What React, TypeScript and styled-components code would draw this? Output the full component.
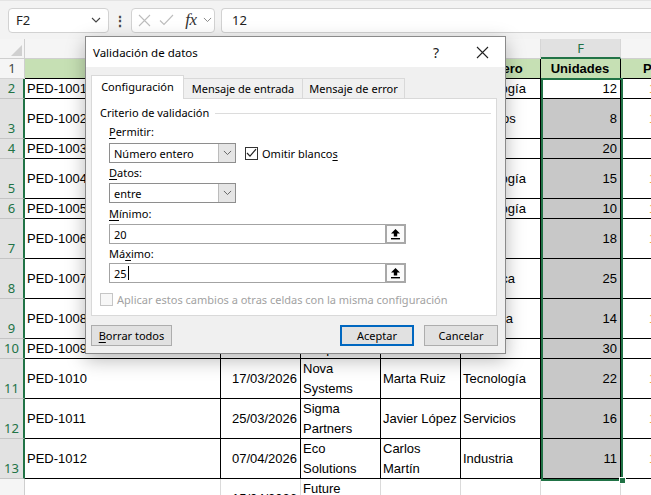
import React from "react";
import styled, { createGlobalStyle, css } from "styled-components";

const UI = `"Segoe UI", "Noto Sans", "Open Sans", sans-serif`;
const CELL = `"Liberation Sans", Arial, sans-serif`;
const GREEN = "#217346";
const COLS = "25px 196px 80px 80px 80px 80px 80px 110px";

const GlobalStyle = createGlobalStyle`
  html, body { margin: 0; padding: 0; background: #fff; overflow: hidden; }
  * { box-sizing: border-box; }
`;

const Page = styled.div`
  position: relative;
  width: 651px;
  height: 495px;
  overflow: hidden;
  background: #fff;
`;

/* ---------- formula bar ---------- */
const FormulaBar = styled.div`
  display: flex;
  align-items: center;
  height: 39px;
  padding-left: 8px;
  background: #f3f3f3;
  border-top: 1px solid #e4e4e4;
  font-family: ${UI};
  font-size: 13px;
  color: #222;
`;

const Box = styled.div`
  height: 25px;
  background: #fff;
  border: 1px solid #d2d2d2;
  border-radius: 4px;
  display: flex;
  align-items: center;
`;

const NameBox = styled(Box)`
  width: 101px;
  justify-content: space-between;
  padding: 0 7px 0 7px;
`;

const Dots = styled.div`
  width: 22px;
  text-align: center;
  font-weight: bold;
  font-size: 14px;
  color: #444;
`;

const FxBox = styled(Box)`
  width: 84px;
  padding-left: 5px;
`;

const FxSlot = styled.div<{ $w: number }>`
  width: ${(p) => p.$w}px;
  display: flex;
  align-items: center;
  justify-content: center;
`;

const FxText = styled.span`
  font-family: "Liberation Serif", "DejaVu Serif", serif;
  font-style: italic;
  font-size: 17px;
  color: #333;
  letter-spacing: -0.5px;
`;

const FormulaInput = styled(Box)`
  flex: 1;
  margin-left: 6px;
  border-right: none;
  border-radius: 4px 0 0 4px;
  padding-left: 10px;
`;

/* ---------- sheet ---------- */
const Sheet = styled.div`
  display: flex;
  flex-direction: column;
`;

const HeaderRow = styled.div`
  display: grid;
  grid-template-columns: ${COLS};
  height: 20px;
  background: #f5f5f5;
`;

const Corner = styled.div`
  display: flex;
  align-items: flex-end;
  justify-content: flex-end;
  padding: 0 2px 2px 0;
  border-right: 1px solid #cfcfcf;
  border-bottom: 1px solid #cfcfcf;
`;

const ColHead = styled.div<{ $sel?: boolean }>`
  display: flex;
  align-items: center;
  justify-content: center;
  font-family: ${UI};
  font-size: 13px;
  color: #555;
  border-right: 1px solid #d6d6d6;
  border-bottom: 1px solid #cfcfcf;
  ${(p) =>
    p.$sel &&
    css`
      background: #e1e1e1;
      color: ${GREEN};
      border-bottom: 2px solid ${GREEN};
    `}
`;

const DataRow = styled.div<{ $h: number }>`
  display: grid;
  grid-template-columns: ${COLS};
  grid-template-rows: ${(p) => p.$h}px;
  height: ${(p) => p.$h}px;
  flex-shrink: 0;
`;

const RowHead = styled.div<{ $sel?: boolean }>`
  display: flex;
  align-items: flex-end;
  justify-content: center;
  padding-bottom: 1px;
  font-family: ${UI};
  font-size: 13px;
  line-height: 17px;
  background: ${(p) => (p.$sel ? "#e2e2e2" : "#f5f5f5")};
  color: ${(p) => (p.$sel ? GREEN : "#444")};
  border-bottom: 1px solid ${(p) => (p.$sel ? "#c4c4c4" : "#d4d4d4")};
  border-right: ${(p) => (p.$sel ? `2px solid ${GREEN}` : "1px solid #cfcfcf")};
`;

const Cell = styled.div<{
  $align?: "left" | "right" | "center";
  $bg?: string;
  $bold?: boolean;
  $plain?: boolean;
  $last?: boolean;
  $color?: string;
  $indent?: number;
}>`
  display: flex;
  align-items: center;
  justify-content: ${(p) =>
    p.$align === "right" ? "flex-end" : p.$align === "center" ? "center" : "flex-start"};
  text-align: ${(p) => p.$align || "left"};
  padding: 0 3px 0 ${(p) => (p.$indent != null ? p.$indent : 2)}px;
  font-family: ${CELL};
  font-size: 13px;
  line-height: 20px;
  font-weight: ${(p) => (p.$bold ? 700 : 400)};
  color: ${(p) => p.$color || "#000"};
  background: ${(p) => p.$bg || "#fff"};
  border-bottom: 1px solid ${(p) => (p.$plain ? "#dadada" : "#000")};
  border-right: ${(p) => (p.$last ? "none" : `1px solid ${p.$plain ? "#dadada" : "#000"}`)};
  overflow: hidden;
  white-space: ${(p) => (p.$align === "right" || p.$last ? "nowrap" : "normal")};
`;

const Selection = styled.div`
  position: absolute;
  left: 541px;
  top: 78px;
  width: 82px;
  height: 403px;
  border: 2px solid ${GREEN};
  pointer-events: none;
`;

const FillHandle = styled.div`
  position: absolute;
  right: -5px;
  bottom: -5px;
  width: 7px;
  height: 7px;
  background: ${GREEN};
  border: 1px solid #fff;
`;

/* ---------- dialog ---------- */
const Dialog = styled.div`
  position: absolute;
  left: 85px;
  top: 36px;
  width: 421px;
  height: 318px;
  display: flex;
  flex-direction: column;
  background: #f0f0f0;
  border: 1px solid #8a8a8a;
  box-shadow: 0 6px 18px rgba(0, 0, 0, 0.28);
  font-family: ${UI};
  font-size: 11px;
  color: #000;
`;

const TitleBar = styled.div`
  display: flex;
  align-items: center;
  height: 30px;
  background: #fff;
  padding-left: 7px;
`;

const TitleText = styled.div`
  flex: 1;
  font-size: 11.5px;
`;

const TitleButton = styled.div`
  width: 46px;
  height: 30px;
  display: flex;
  align-items: center;
  justify-content: center;
  font-size: 14px;
  color: #222;
`;

const Body = styled.div`
  flex: 1;
  display: flex;
  flex-direction: column;
  padding: 8px 8px 0 5px;
`;

const TabStrip = styled.div`
  display: flex;
  align-items: flex-end;
  height: 23px;
`;

const Tab = styled.div<{ $w: number; $active?: boolean }>`
  width: ${(p) => p.$w}px;
  height: ${(p) => (p.$active ? 24 : 20)}px;
  display: flex;
  align-items: center;
  justify-content: center;
  padding-bottom: ${(p) => (p.$active ? 2 : 0)}px;
  background: ${(p) => (p.$active ? "#fff" : "#f0f0f0")};
  border: 1px solid #d9d9d9;
  border-bottom: none;
  border-left: ${(p) => (p.$active ? "1px solid #d9d9d9" : "none")};
  margin-bottom: ${(p) => (p.$active ? -1 : 0)}px;
  white-space: nowrap;
  position: relative;
  z-index: ${(p) => (p.$active ? 1 : 0)};
`;

const Panel = styled.div`
  height: 218px;
  background: #fff;
  border: 1px solid #d9d9d9;
  padding: 7px 5px 0 8px;
`;

const GroupHeader = styled.div`
  display: flex;
  align-items: center;
  gap: 6px;
  line-height: 14px;
`;

const GroupLine = styled.div`
  flex: 1;
  height: 1px;
  background: #dcdcdc;
`;

const Form = styled.div`
  display: flex;
  flex-direction: column;
  padding-left: 9px;
`;

const FieldLabel = styled.div<{ $mt: number }>`
  line-height: 14px;
  margin-top: ${(p) => p.$mt}px;
`;

const Key = styled.span`
  text-decoration: underline;
  text-underline-offset: 2px;
`;

const FieldRow = styled.div<{ $mt: number }>`
  display: flex;
  align-items: center;
  gap: 9px;
  margin-top: ${(p) => p.$mt}px;
`;

const Select = styled.div`
  width: 127px;
  height: 20px;
  display: flex;
  border: 1px solid #8e8e8e;
  background: #fff;
`;

const SelectValue = styled.div`
  flex: 1;
  display: flex;
  align-items: center;
  padding-left: 4px;
`;

const SelectButton = styled.div`
  width: 17px;
  display: flex;
  align-items: center;
  justify-content: center;
  background: #e5e5e5;
  border-left: 1px solid #bcbcbc;
`;

const CheckBox = styled.div<{ $disabled?: boolean }>`
  width: 13px;
  height: 13px;
  display: flex;
  align-items: center;
  justify-content: center;
  border: 1px solid ${(p) => (p.$disabled ? "#c6c6c6" : "#333")};
  background: ${(p) => (p.$disabled ? "#f7f7f7" : "#fff")};
`;

const CheckLabel = styled.span<{ $disabled?: boolean }>`
  margin-left: -5px;
  white-space: nowrap;
  color: ${(p) => (p.$disabled ? "#a2a2a2" : "#000")};
`;

const TextInput = styled.div`
  width: 297px;
  height: 20px;
  display: flex;
  border: 1px solid #a3a3a3;
  background: #fff;
`;

const InputValue = styled.div`
  flex: 1;
  display: flex;
  align-items: center;
  padding-left: 4px;
`;

const Caret = styled.span`
  display: inline-block;
  width: 1px;
  height: 14px;
  background: #000;
  margin-left: 1px;
`;

const RangeButton = styled.div`
  width: 21px;
  margin: -1px -1px -1px 0;
  display: flex;
  align-items: center;
  justify-content: center;
  border: 2px solid #a8a8a8;
  background: #fbfbfb;
`;

const ButtonRow = styled.div`
  display: flex;
  align-items: center;
  margin-top: 9px;
`;

const ButtonGroup = styled.div`
  display: flex;
  gap: 10px;
  margin-left: auto;
  margin-right: -1px;
`;

const Button = styled.div<{ $w: number; $primary?: boolean }>`
  width: ${(p) => p.$w}px;
  height: 21px;
  display: flex;
  align-items: center;
  justify-content: center;
  background: #e1e1e1;
  border: ${(p) => (p.$primary ? "2px solid #0067c0" : "1px solid #adadad")};
`;

/* ---------- icons ---------- */
const Chevron = ({ color = "#444", w = 10 }: { color?: string; w?: number }) => (
  <svg width={w} height={w / 2 + 1} viewBox="0 0 10 6">
    <polyline points="1,1 5,5 9,1" fill="none" stroke={color} strokeWidth="1.1" />
  </svg>
);

const RangeIcon = () => (
  <svg width="11" height="12" viewBox="0 0 11 12">
    <path d="M5.5 1 L10 5.6 H7.2 V8.6 H3.8 V5.6 H1 Z" fill="#000" />
    <rect x="1" y="10" width="9" height="1.4" fill="#000" />
  </svg>
);

/* ---------- data ---------- */
type Row = {
  n: number;
  h: number;
  a: string;
  b: string;
  c: string;
  d: string;
  e: string;
  f: string;
  g: boolean;
};

const rows: Row[] = [
  { n: 2, h: 20, a: "PED-1001", b: "05/01/2026", c: "TechNova", d: "Ana Gómez", e: "Tecnología", f: "12", g: true },
  { n: 3, h: 40, a: "PED-1002", b: "12/01/2026", c: "Global Services", d: "Luis Pérez", e: "Servicios", f: "8", g: true },
  { n: 4, h: 20, a: "PED-1003", b: "20/01/2026", c: "MegaStore", d: "Sara Díaz", e: "Retail", f: "20", g: false },
  { n: 5, h: 40, a: "PED-1004", b: "28/01/2026", c: "Data Solutions", d: "Pedro Sanz", e: "Tecnología", f: "15", g: true },
  { n: 6, h: 20, a: "PED-1005", b: "03/02/2026", c: "CloudIT", d: "Elena Ruiz", e: "Tecnología", f: "10", g: true },
  { n: 7, h: 40, a: "PED-1006", b: "10/02/2026", c: "Retail Express", d: "Jorge Vega", e: "Retail", f: "18", g: true },
  { n: 8, h: 40, a: "PED-1007", b: "18/02/2026", c: "Trans Cargo", d: "Lucía Mora", e: "Logística", f: "25", g: false },
  { n: 9, h: 40, a: "PED-1008", b: "25/02/2026", c: "Metal Works", d: "Diego Gil", e: "Industria", f: "14", g: true },
  { n: 10, h: 20, a: "PED-1009", b: "06/03/2026", c: "ShopMax", d: "Ana Pérez", e: "Retail", f: "30", g: false },
  { n: 11, h: 40, a: "PED-1010", b: "17/03/2026", c: "Nova Systems", d: "Marta Ruiz", e: "Tecnología", f: "22", g: true },
  { n: 12, h: 40, a: "PED-1011", b: "25/03/2026", c: "Sigma Partners", d: "Javier López", e: "Servicios", f: "16", g: true },
  { n: 13, h: 40, a: "PED-1012", b: "07/04/2026", c: "Eco Solutions", d: "Carlos Martín", e: "Industria", f: "11", g: true },
];

const HEAD_BG = "#c6e0b4";
const SEL_BG = "#c8c8c8";
const ORANGE = "#eea43a";

export default function App() {
  return (
    <Page>
      <GlobalStyle />
      <FormulaBar>
        <NameBox>
          <span>F2</span>
          <Chevron />
        </NameBox>
        <Dots>⋮</Dots>
        <FxBox>
          <FxSlot $w={14}>
            <svg width="13" height="13" viewBox="0 0 13 13">
              <path d="M1 1L12 12M12 1L1 12" stroke="#bdbdbd" strokeWidth="1.1" />
            </svg>
          </FxSlot>
          <FxSlot $w={30}>
            <svg width="15" height="12" viewBox="0 0 15 12">
              <path d="M1 6.5L5 10.5L14 1" fill="none" stroke="#bdbdbd" strokeWidth="1.1" />
            </svg>
          </FxSlot>
          <FxSlot $w={20}>
            <FxText>fx</FxText>
          </FxSlot>
          <FxSlot $w={12}>
            <Chevron color="#888" w={9} />
          </FxSlot>
        </FxBox>
        <FormulaInput>12</FormulaInput>
      </FormulaBar>

      <Sheet>
        <HeaderRow>
          <Corner>
            <svg width="11" height="11" viewBox="0 0 11 11">
              <path d="M11 0V11H0Z" fill="#d0d0d0" />
            </svg>
          </Corner>
          <ColHead>A</ColHead>
          <ColHead>B</ColHead>
          <ColHead>C</ColHead>
          <ColHead>D</ColHead>
          <ColHead>E</ColHead>
          <ColHead $sel>F</ColHead>
          <ColHead>G</ColHead>
        </HeaderRow>

        <DataRow $h={20}>
          <RowHead>1</RowHead>
          <Cell $bg={HEAD_BG} $bold $align="center">Pedido</Cell>
          <Cell $bg={HEAD_BG} $bold $align="center">Fecha</Cell>
          <Cell $bg={HEAD_BG} $bold $align="center">Cliente</Cell>
          <Cell $bg={HEAD_BG} $bold $align="center">Vendedor</Cell>
          <Cell $bg={HEAD_BG} $bold $align="center">Género</Cell>
          <Cell $bg={HEAD_BG} $bold $align="center">Unidades</Cell>
          <Cell $bg={HEAD_BG} $bold $indent={22} $last>Precio</Cell>
        </DataRow>

        {rows.map((r) => (
          <DataRow key={r.n} $h={r.h}>
            <RowHead $sel>{r.n}</RowHead>
            <Cell>{r.a}</Cell>
            <Cell $align="right">{r.b}</Cell>
            <Cell>{r.c}</Cell>
            <Cell>{r.d}</Cell>
            <Cell>{r.e}</Cell>
            <Cell $align="right" $bg={r.n === 2 ? "#fff" : SEL_BG}>
              {r.f}
            </Cell>
            <Cell $last $indent={28} $color={ORANGE}>
              {r.g ? "125,00 €" : ""}
            </Cell>
          </DataRow>
        ))}

        <DataRow $h={40}>
          <RowHead>14</RowHead>
          <Cell $plain></Cell>
          <Cell $plain $align="right">15/04/2026</Cell>
          <Cell $plain>Future Retail</Cell>
          <Cell $plain></Cell>
          <Cell $plain></Cell>
          <Cell $plain></Cell>
          <Cell $plain $last></Cell>
        </DataRow>
      </Sheet>

      <Selection>
        <FillHandle />
      </Selection>

      <Dialog>
        <TitleBar>
          <TitleText>Validación de datos</TitleText>
          <TitleButton>?</TitleButton>
          <TitleButton>
            <svg width="13" height="13" viewBox="0 0 13 13">
              <path d="M1 1L12 12M12 1L1 12" stroke="#222" strokeWidth="1.1" />
            </svg>
          </TitleButton>
        </TitleBar>
        <Body>
          <TabStrip>
            <Tab $w={93} $active>
              Configuración
            </Tab>
            <Tab $w={119}>Mensaje de entrada</Tab>
            <Tab $w={102}>Mensaje de error</Tab>
          </TabStrip>
          <Panel>
            <GroupHeader>
              <span>Criterio de validación</span>
              <GroupLine />
            </GroupHeader>
            <Form>
              <FieldLabel $mt={5}>
                <Key>P</Key>ermitir:
              </FieldLabel>
              <FieldRow $mt={4}>
                <Select>
                  <SelectValue>Número entero</SelectValue>
                  <SelectButton>
                    <Chevron color="#666" w={9} />
                  </SelectButton>
                </Select>
                <CheckBox>
                  <svg width="11" height="10" viewBox="0 0 11 10">
                    <path d="M1 5L4 8.2L10 1.2" fill="none" stroke="#222" strokeWidth="1.2" />
                  </svg>
                </CheckBox>
                <CheckLabel>
                  Omitir blanco<Key>s</Key>
                </CheckLabel>
              </FieldRow>
              <FieldLabel $mt={3}>
                <Key>D</Key>atos:
              </FieldLabel>
              <FieldRow $mt={3}>
                <Select>
                  <SelectValue>entre</SelectValue>
                  <SelectButton>
                    <Chevron color="#666" w={9} />
                  </SelectButton>
                </Select>
              </FieldRow>
              <FieldLabel $mt={4}>
                <Key>M</Key>ínimo:
              </FieldLabel>
              <FieldRow $mt={3}>
                <TextInput>
                  <InputValue>20</InputValue>
                  <RangeButton>
                    <RangeIcon />
                  </RangeButton>
                </TextInput>
              </FieldRow>
              <FieldLabel $mt={3}>
                Má<Key>x</Key>imo:
              </FieldLabel>
              <FieldRow $mt={2}>
                <TextInput>
                  <InputValue>
                    25
                    <Caret />
                  </InputValue>
                  <RangeButton>
                    <RangeIcon />
                  </RangeButton>
                </TextInput>
              </FieldRow>
            </Form>
            <FieldRow $mt={9}>
              <CheckBox $disabled />
              <CheckLabel $disabled>
                Aplicar estos cambios a otras celdas con la misma configuración
              </CheckLabel>
            </FieldRow>
          </Panel>
          <ButtonRow>
            <Button $w={81}>
              <span>
                <Key>B</Key>orrar todos
              </span>
            </Button>
            <ButtonGroup>
              <Button $w={74} $primary>
                Aceptar
              </Button>
              <Button $w={74}>Cancelar</Button>
            </ButtonGroup>
          </ButtonRow>
        </Body>
      </Dialog>
    </Page>
  );
}
